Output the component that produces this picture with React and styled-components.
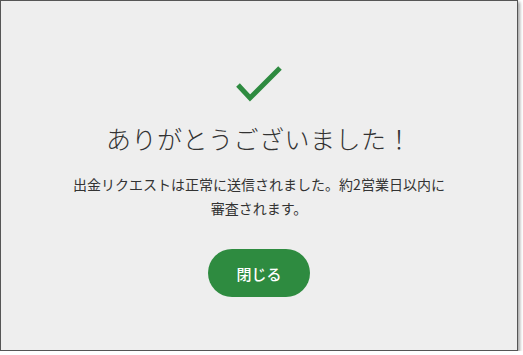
import React from "react";
import styled, { createGlobalStyle } from "styled-components";

const GlobalStyle = createGlobalStyle`
  html, body {
    margin: 0;
    padding: 0;
    background: #ffffff;
  }
  body {
    font-family: "Noto Sans CJK JP", "Noto Sans", sans-serif;
  }
`;

const Dialog = styled.div`
  box-sizing: border-box;
  width: 518px;
  height: 351px;
  background: #eeeeee;
  border: 1px solid #555555;
  box-shadow: 2px 2px 3px rgba(0, 0, 0, 0.35);
  display: flex;
  flex-direction: column;
  align-items: center;
  padding-top: 63px;
`;

const Check = styled.svg`
  width: 50px;
  height: 42px;
  display: block;
`;

const Title = styled.h1`
  margin: 14px 0 0;
  font-size: 25px;
  font-weight: 300;
  color: #333333;
  line-height: 36px;
  letter-spacing: 0.5px;
`;

const Message = styled.p`
  margin: 16px 0 0;
  font-size: 14px;
  line-height: 24px;
  color: #333333;
  text-align: center;
`;

const CloseButton = styled.button`
  margin-top: 29px;
  width: 102px;
  height: 48px;
  border: none;
  border-radius: 24px;
  background: #2e8b40;
  color: #ffffff;
  font-family: inherit;
  font-size: 15px;
  font-weight: 500;
  cursor: pointer;
`;

const App = () => {
  return (
    <>
      <GlobalStyle />
      <Dialog>
        <Check viewBox="0 0 50 42">
          <path d="M4 21 L16 34 L46 4" fill="none" stroke="#2e8b40" strokeWidth="5" />
        </Check>
        <Title>ありがとうございました！</Title>
        <Message>
          出金リクエストは正常に送信されました。約2営業日以内に
          <br />
          審査されます。
        </Message>
        <CloseButton>閉じる</CloseButton>
      </Dialog>
    </>
  );
};

export default App;
